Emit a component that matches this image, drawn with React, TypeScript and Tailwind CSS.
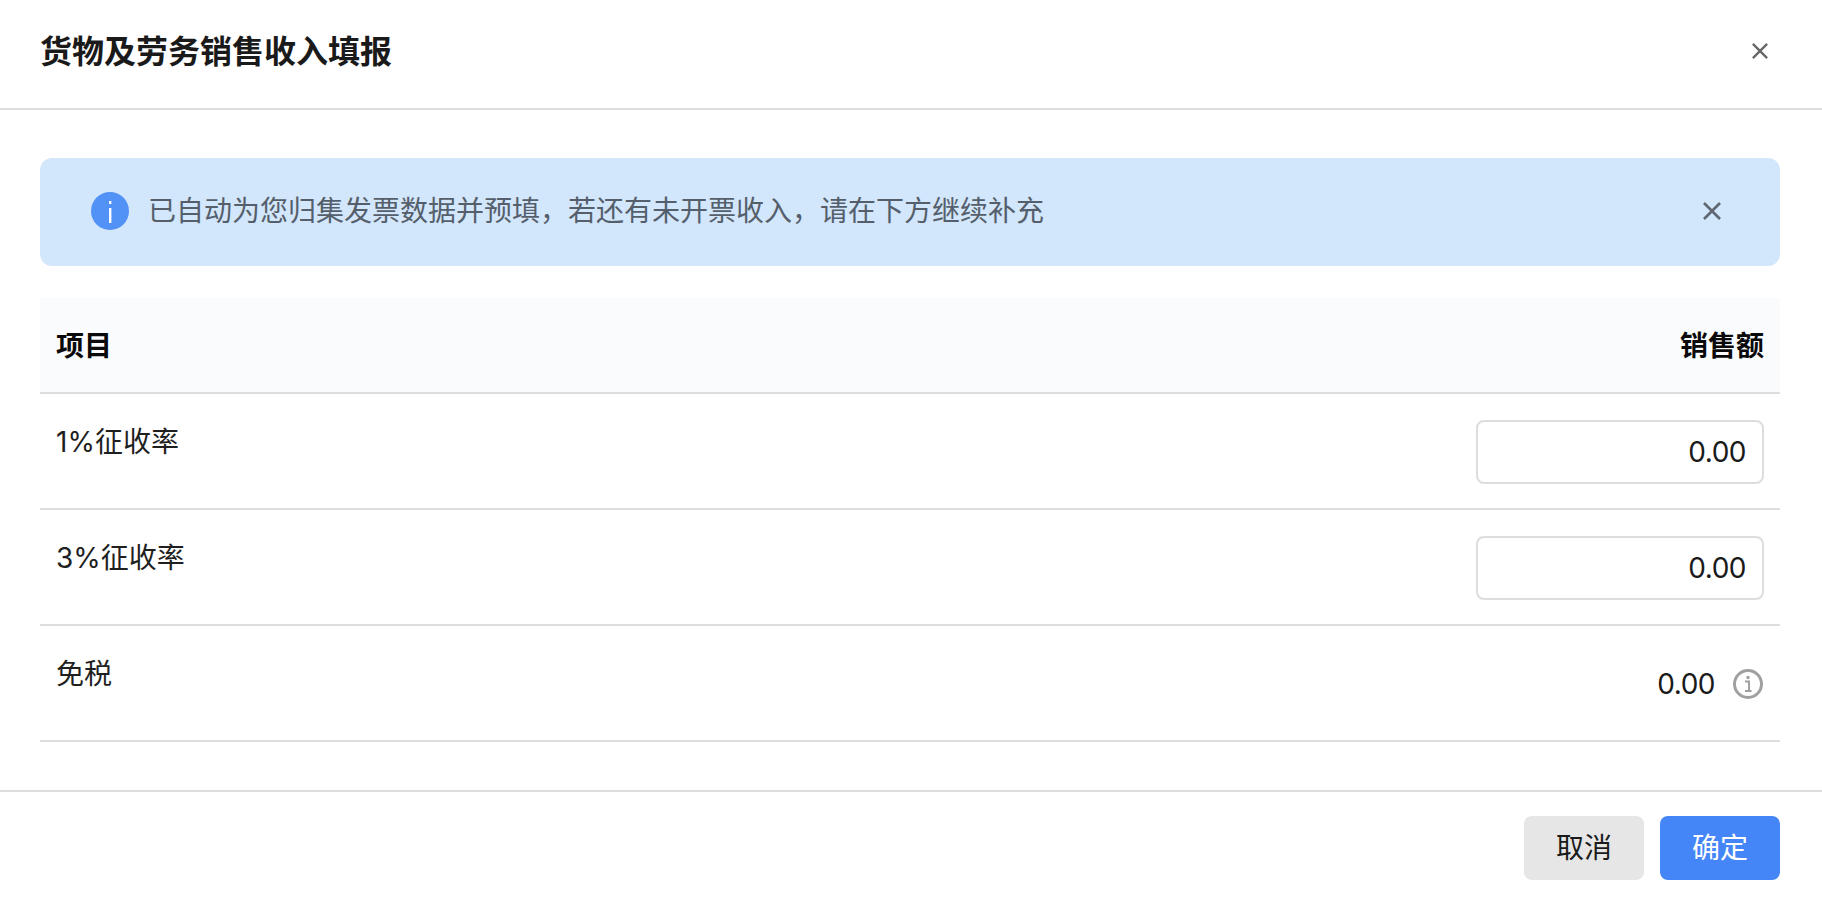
import React from "react";

const font = "font-['Inter','Noto_Sans_CJK_SC',sans-serif]";

function Cross({ className }: { className: string }) {
  return (
    <svg viewBox="0 0 18 18" className={className} fill="none" stroke="currentColor" strokeWidth="2.6">
      <path d="M1 1L17 17M17 1L1 17" />
    </svg>
  );
}

function Row({ label, children }: { label: string; children: React.ReactNode }) {
  return (
    <div className="flex h-[116px] justify-between border-b-2 border-[#dddddd] px-4">
      <div className="pt-[26px] text-[28px] leading-[44px] text-[#1f1f1f]">{label}</div>
      <div className="flex items-center pt-[2px]">{children}</div>
    </div>
  );
}

function Amount() {
  return (
    <input
      readOnly
      defaultValue="0.00"
      className="h-16 w-[288px] rounded-lg border-2 border-[#dddddd] bg-white px-4 text-right text-[28px] tracking-[-0.5px] text-[#1a1a1a] outline-none"
    />
  );
}

export default function App() {
  return (
    <div className={`${font} flex h-[898px] flex-col bg-white`}>
      <header className="flex h-[110px] shrink-0 items-center justify-between border-b-2 border-[#dddddd] pr-[54px] pl-10 pb-[6px]">
        <h1 className="translate-y-px text-[32px] font-bold text-[#1a1a1a]">货物及劳务销售收入填报</h1>
        <Cross className="size-4 text-[#666666]" />
      </header>

      <main className="flex-1 pt-12 pr-[42px] pl-10">
        <div className="flex h-[108px] items-center justify-between rounded-xl bg-[#d2e6fc] pr-[59px] pl-[51px]">
          <div className="flex items-center gap-[19px]">
            <svg viewBox="0 0 38 38" className="size-[38px] shrink-0 -translate-y-px">
              <circle cx="19" cy="19" r="19" fill="#5292f7" />
              <rect x="18" y="16" width="2.4" height="15" fill="#ffffff" />
              <rect x="18" y="9" width="2.4" height="3" fill="#ffffff" />
            </svg>
            <span className="-translate-y-px text-[28px] text-[#555f6b]">已自动为您归集发票数据并预填，若还有未开票收入，请在下方继续补充</span>
          </div>
          <Cross className="mb-[3px] size-[18px] text-[#5f6670]" />
        </div>

        <div className="mt-8">
          <div className="flex h-[96px] items-center justify-between border-b-2 border-[#dddddd] bg-[#fafbfd] px-4 pt-[2px] text-[28px] font-bold text-[#0a0a0a]">
            <span>项目</span>
            <span>销售额</span>
          </div>
          <Row label="1%征收率"><Amount /></Row>
          <Row label="3%征收率"><Amount /></Row>
          <Row label="免税">
            <span className="text-[28px] tracking-[-0.5px] text-[#1a1a1a]">0.00</span>
            <svg viewBox="0 0 30 30" className="mr-px ml-[18px] size-[30px]" fill="none">
              <circle cx="15" cy="15" r="13.5" stroke="#a0a0a0" strokeWidth="3" />
              <circle cx="15" cy="8.5" r="1.7" fill="#a0a0a0" />
              <path d="M12 12.5H16V21.5M12 22H18.5" stroke="#a0a0a0" strokeWidth="2" />
            </svg>
          </Row>
        </div>
      </main>

      <footer className="flex h-[108px] shrink-0 items-start justify-end gap-4 border-t-2 border-[#dddddd] pt-6 pr-[42px] pl-10">
        <button className="h-16 w-[120px] rounded-lg bg-[#e6e6e6] text-[28px] text-[#1a1a1a]">取消</button>
        <button className="h-16 w-[120px] rounded-lg bg-[#4485f8] text-[28px] text-white">确定</button>
      </footer>
    </div>
  );
}
